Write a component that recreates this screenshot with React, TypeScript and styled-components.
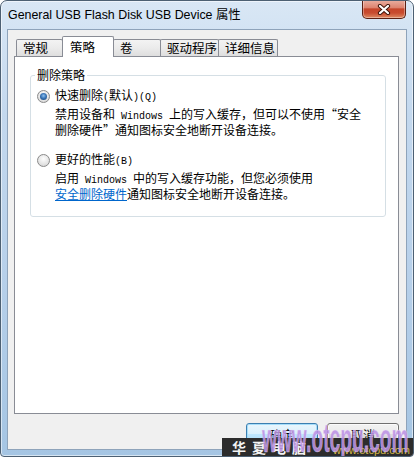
import React from "react";
import styled, { createGlobalStyle } from "styled-components";

const GlobalStyle = createGlobalStyle`
  html, body {
    margin: 0;
    padding: 0;
    background: #fff;
  }
  body {
    width: 414px;
    height: 457px;
    overflow: hidden;
  }
  * {
    box-sizing: border-box;
  }
`;

const Window = styled.div`
  position: relative;
  width: 414px;
  height: 457px;
  display: flex;
  flex-direction: column;
  padding: 0 6px 6px;
  border: 1px solid #4d6073;
  border-radius: 7px 7px 4px 4px;
  background: linear-gradient(180deg, #d9e7f5 0%, #c3d8ee 25%, #b7d0ea 60%, #a5c5e3 100%);
  box-shadow: inset 0 0 0 1px rgba(255, 255, 255, 0.55);
  overflow: hidden;
  font-family: "Noto Sans CJK SC", sans-serif;
  color: #000;
`;

const TitleBar = styled.div`
  height: 28px;
  display: flex;
  align-items: flex-start;
  justify-content: space-between;
`;

const Title = styled.div`
  padding: 6px 0 0 1px;
  font-family: "Liberation Sans", "Noto Sans CJK SC", sans-serif;
  font-size: 12.4px;
  line-height: 16px;
  color: #000;
`;

const CloseButton = styled.div`
  width: 44px;
  height: 19px;
  margin: -1px 1px 0 0;
  display: flex;
  align-items: center;
  justify-content: center;
  border: 1px solid #5c2013;
  border-top: none;
  border-radius: 0 0 5px 5px;
  background: linear-gradient(180deg, #eab0a2 0%, #dd8470 42%, #c5452a 50%, #c84b2f 72%, #de8a63 100%);
  box-shadow: inset 0 0 0 1px rgba(255, 255, 255, 0.35);
`;

const Client = styled.div`
  flex: 1;
  display: flex;
  flex-direction: column;
  background: #f0f0f0;
  border: 1px solid #8ea3ba;
  padding: 6px 7px 3px 6px;
`;

const TabStrip = styled.div`
  position: relative;
  z-index: 1;
  height: 20px;
  display: flex;
  align-items: flex-end;
  padding-left: 2px;
`;

const Tab = styled.div<{ $w: number; $active?: boolean }>`
  width: ${(p) => p.$w}px;
  height: ${(p) => (p.$active ? 21 : 17)}px;
  margin: 0 -1px ${(p) => (p.$active ? -1 : 0)}px 0;
  padding: ${(p) => (p.$active ? "2px 0 0 7px" : "0 0 0 6px")};
  border: 1px solid #898c95;
  border-bottom: none;
  border-radius: 2px 2px 0 0;
  background: ${(p) => (p.$active ? "#fff" : "linear-gradient(180deg, #f3f3f3 0%, #ebebeb 50%, #dedede 100%)")};
  font-size: 12.5px;
  line-height: 15px;
  white-space: nowrap;
  position: relative;
  z-index: ${(p) => (p.$active ? 2 : 1)};
`;

const Panel = styled.div`
  flex: 1;
  background: #fff;
  border: 1px solid #898c95;
  padding: 11px 12px 0 15px;
`;

const Group = styled.fieldset`
  margin: 0;
  min-width: 0;
  padding: 7px 0 16px 6px;
  border: 1px solid #d5dfe5;
  border-radius: 3px;
`;

const Legend = styled.legend`
  margin-left: -2px;
  padding: 0 2px;
  font-size: 12px;
  line-height: 14px;
`;

const Option = styled.div<{ $gap?: number }>`
  margin-top: ${(p) => p.$gap ?? 0}px;
`;

const RadioRow = styled.label`
  display: flex;
  align-items: center;
  gap: 5px;
  height: 14px;
  font-size: 12px;
  line-height: 14px;
`;

const Radio = styled.span<{ $checked?: boolean }>`
  position: relative;
  flex: none;
  width: 13px;
  height: 13px;
  border-radius: 50%;
  border: 1px solid #8a8a8a;
  background: radial-gradient(circle at 50% 35%, #fdfdfd 0%, #e6e6e6 55%, #cdcdcd 100%);
  &::after {
    content: "";
    display: ${(p) => (p.$checked ? "block" : "none")};
    position: absolute;
    inset: 2px;
    border-radius: 50%;
    background: radial-gradient(circle at 50% 40%, #8fc0ee 0%, #3a76b8 45%, #173e6e 100%);
  }
`;

const Desc = styled.div`
  margin: 4px 0 0 18px;
  font-size: 12px;
  line-height: 13px;
`;

const Half = styled.span`
  font-family: "Liberation Mono", monospace;
  font-size: 10px;
`;

const Link = styled.a`
  color: #0066cc;
  text-decoration: underline;
`;

const ButtonRow = styled.div`
  display: flex;
  justify-content: flex-end;
  gap: 9px;
  margin-top: 9px;
  height: 23px;
`;

const Button = styled.button<{ $default?: boolean }>`
  width: 72px;
  height: 23px;
  padding: 0;
  border: 1px solid ${(p) => (p.$default ? "#3c7fb1" : "#707070")};
  border-radius: 3px;
  background: ${(p) =>
    p.$default
      ? "linear-gradient(180deg, #eaf6fd 0%, #d9f0fc 49%, #bee6fd 50%, #a7d9f5 100%)"
      : "linear-gradient(180deg, #f2f2f2 0%, #ebebeb 49%, #dddddd 50%, #cfcfcf 100%)"};
  box-shadow: inset 0 0 0 1px ${(p) => (p.$default ? "rgba(160, 220, 250, 0.9)" : "rgba(255, 255, 255, 0.7)")};
  font-family: "Noto Sans CJK SC", sans-serif;
  font-size: 12px;
  line-height: 14px;
  color: #000;
`;

const Watermark = styled.div`
  position: absolute;
  right: -1px;
  bottom: -1px;
  width: 192px;
  height: 19px;
  padding-left: 10px;
  background: #2c2c2c;
  color: #f4f4f4;
  font-family: "Noto Sans CJK SC", sans-serif;
  font-weight: 700;
  font-size: 14px;
  line-height: 19px;
  letter-spacing: 6px;
  white-space: nowrap;
`;

const MarkSmall = styled.span`
  position: absolute;
  right: 4px;
  bottom: 1px;
  font-family: "Liberation Sans", sans-serif;
  font-weight: 400;
  font-size: 11px;
  line-height: 12px;
  letter-spacing: 0;
  color: #d4b948;
`;

const MarkBig = styled.span`
  position: absolute;
  left: 40px;
  top: -20px;
  font-family: "Liberation Sans", sans-serif;
  font-weight: 700;
  font-size: 40px;
  line-height: 40px;
  letter-spacing: 0;
  color: rgba(188, 146, 228, 0.88);
  transform: scaleX(0.48);
  transform-origin: left top;
  -webkit-text-stroke: 0.6px rgba(240, 225, 255, 0.7);
`;

function CloseGlyph() {
  return (
    <svg width="14" height="11" viewBox="0 0 14 11">
      <path d="M3 2 L11 9 M11 2 L3 9" stroke="#3d1309" strokeWidth="4.2" strokeLinecap="round" />
      <path d="M3 2 L11 9 M11 2 L3 9" stroke="#fff" strokeWidth="2.3" strokeLinecap="round" />
    </svg>
  );
}

const tabs = [
  { label: "常规", w: 47 },
  { label: "策略", w: 52, active: true },
  { label: "卷", w: 48 },
  { label: "驱动程序", w: 59 },
  { label: "详细信息", w: 60 },
];

export default function App() {
  return (
    <>
      <GlobalStyle />
      <Window>
        <TitleBar>
          <Title>General USB Flash Disk USB Device 属性</Title>
          <CloseButton>
            <CloseGlyph />
          </CloseButton>
        </TitleBar>
        <Client>
          <TabStrip>
            {tabs.map((t) => (
              <Tab key={t.label} $w={t.w} $active={t.active}>
                {t.label}
              </Tab>
            ))}
          </TabStrip>
          <Panel>
            <Group>
              <Legend>删除策略</Legend>
              <Option>
                <RadioRow>
                  <Radio $checked />
                  <span>
                    快速删除<Half>(</Half>默认<Half>)(Q)</Half>
                  </span>
                </RadioRow>
                <Desc>
                  禁用设备和<Half> Windows </Half>上的写入缓存，但可以不使用“安全
                  <br />
                  删除硬件”通知图标安全地断开设备连接。
                </Desc>
              </Option>
              <Option $gap={17}>
                <RadioRow>
                  <Radio />
                  <span>
                    更好的性能<Half>(B)</Half>
                  </span>
                </RadioRow>
                <Desc>
                  启用<Half> Windows </Half>中的写入缓存功能，但您必须使用
                  <br />
                  <Link>安全删除硬件</Link>通知图标安全地断开设备连接。
                </Desc>
              </Option>
            </Group>
          </Panel>
          <ButtonRow>
            <Button $default>确定</Button>
            <Button>取消</Button>
          </ButtonRow>
        </Client>
        <Watermark>
          华夏电脑
          <MarkSmall>www.otcpu.com</MarkSmall>
          <MarkBig>www.otcpu.com</MarkBig>
        </Watermark>
      </Window>
    </>
  );
}
